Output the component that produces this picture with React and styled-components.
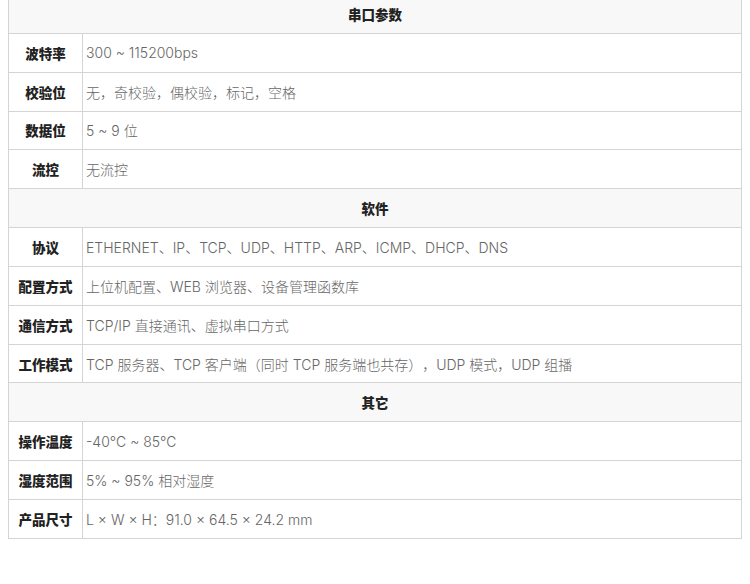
import styled, { createGlobalStyle } from "styled-components"

const GlobalStyle = createGlobalStyle`
    body {
        margin: 0 8px;
        background: #ffffff;
        font-family: Inter, "Noto Sans CJK SC", sans-serif;
    }
`

const Table = styled.table`
    width: 100%;
    margin-top: -6px;
    border-collapse: collapse;
    table-layout: fixed;
    font-size: 13.5px;
`

const Row = styled.tr`
    height: 38.85px;
`

const SectionCell = styled.td`
    background: #f8f8f8;
    border: 1px solid #d4d4d4;
    text-align: center;
    font-family: "Noto Sans CJK SC", sans-serif;
    font-weight: 900;
    color: #222;
    padding: 0;
`

const Label = styled.td`
    border: 1px solid #d4d4d4;
    text-align: center;
    font-family: "Noto Sans CJK SC", sans-serif;
    font-weight: 900;
    color: #222;
    padding: 0;
    white-space: nowrap;
`

const Value = styled.td`
    border: 1px solid #d4d4d4;
    color: #666;
    font-size: 14px;
    font-weight: 300;
    padding: 0 0 0 3px;
    white-space: nowrap;
    text-spacing-trim: space-all;
`

const sections = [
    {
        title: "串口参数",
        rows: [
            ["波特率", "300 ~ 115200bps"],
            ["校验位", "无，奇校验，偶校验，标记，空格"],
            ["数据位", "5 ~ 9 位"],
            ["流控", "无流控"],
        ],
    },
    {
        title: "软件",
        rows: [
            ["协议", "ETHERNET、IP、TCP、UDP、HTTP、ARP、ICMP、DHCP、DNS"],
            ["配置方式", "上位机配置、WEB 浏览器、设备管理函数库"],
            ["通信方式", "TCP/IP 直接通讯、虚拟串口方式"],
            ["工作模式", "TCP 服务器、TCP 客户端（同时 TCP 服务端也共存），UDP 模式，UDP 组播"],
        ],
    },
    {
        title: "其它",
        rows: [
            ["操作温度", "-40℃ ~ 85℃"],
            ["湿度范围", "5% ~ 95% 相对湿度"],
            ["产品尺寸", "L × W × H：91.0 × 64.5 × 24.2 mm"],
        ],
    },
]

const App = () => {
    return (
        <>
            <GlobalStyle />
            <Table>
                <colgroup>
                    <col style={{ width: 74 }} />
                    <col />
                </colgroup>
                <tbody>
                    {sections.map((section) => (
                        <>
                            <Row key={section.title}>
                                <SectionCell colSpan={2}>{section.title}</SectionCell>
                            </Row>
                            {section.rows.map(([label, value]) => (
                                <Row key={label}>
                                    <Label>{label}</Label>
                                    <Value>{value}</Value>
                                </Row>
                            ))}
                        </>
                    ))}
                </tbody>
            </Table>
        </>
    )
}

export default App
